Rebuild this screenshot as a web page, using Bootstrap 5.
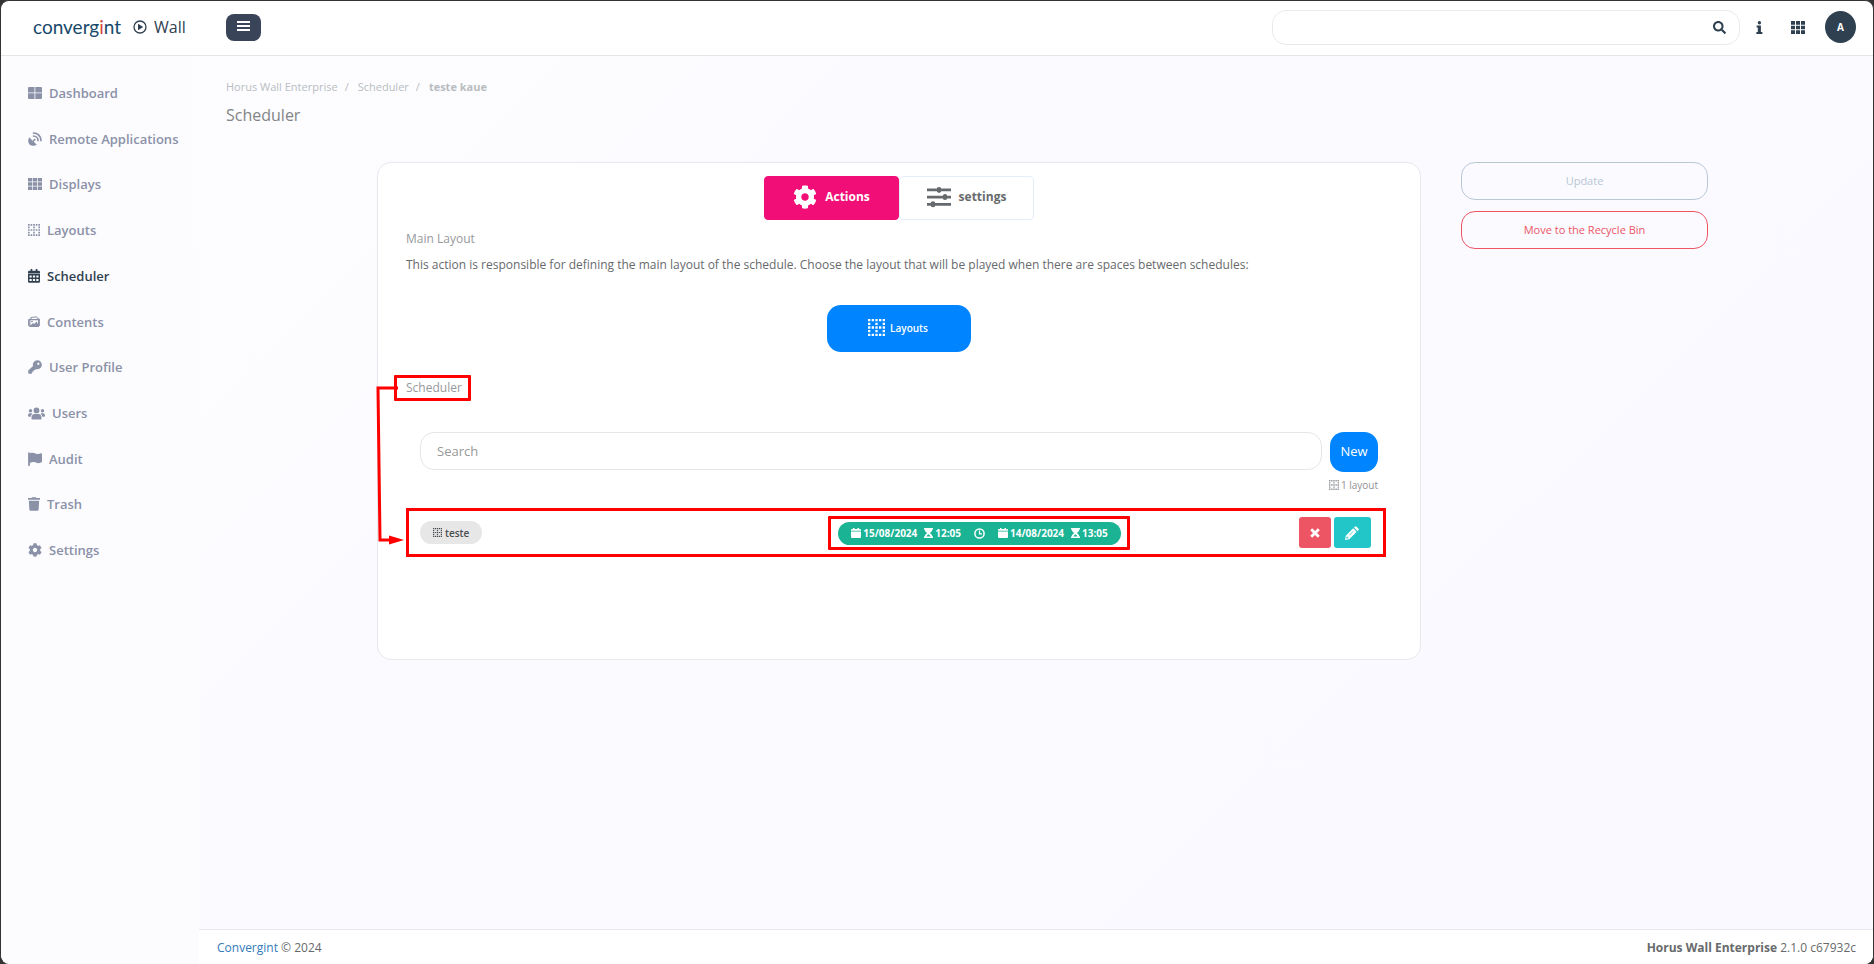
<!DOCTYPE html>
<html lang="en">
<head>
<meta charset="utf-8">
<meta name="viewport" content="width=device-width, initial-scale=1">
<title>Scheduler - Horus Wall Enterprise</title>
<link href="https://cdn.jsdelivr.net/npm/bootstrap@5.3.0/dist/css/bootstrap.min.css" rel="stylesheet">
<style>
  :root { --ink: #2f4050; --muted: #8b91a7; --line: #e7eaec; --blue: #0084ff; --mark: #ff0000; }
  html { background: #333; }
  body { font-family: "Open Sans", sans-serif; font-size: 12px; line-height: 18px; color: #676a6c; background: #333; }
  svg { fill: currentColor; flex: none; display: block; }
  .shell { border: 1px solid #333; border-bottom: 0; border-radius: 9px; background: #fff; overflow: hidden; }
  .topbar { height: 55px; border-bottom: 1px solid #e4e5e9; padding: 0 17px 2px 32px; color: var(--ink); }
  .brand { width: 193px; color: var(--ink); text-decoration: none; gap: 7px; }
  .brand-name { font-family: Lato, sans-serif; font-size: 19px; line-height: 24px; color: #17496b; width: 93px; }
  .brand-name span { color: #d8433f; }
  .brand-app { font-size: 16px; }
  .menu-btn { width: 35px; height: 27px; border: 0; border-radius: 8px; background: #3a4459; color: #fff; }
  .top-search { width: 468px; height: 35px; border: 1px solid var(--line); border-radius: 14px; padding: 0 13px 0 16px; }
  .top-search input { border: 0; outline: 0; background: none; min-width: 0; }
  .plain { border: 0; background: none; padding: 0; color: var(--ink); }
  .avatar { width: 31px; height: 32px; border: 0; border-radius: 50%; background: var(--ink); color: #fff; font-size: 10px; font-weight: 700; }
  .side { width: 198px; background: #fcfcff; padding-top: 14px; }
  .side ul { height: 503px; }
  .side a { color: var(--muted); font-size: 13px; font-weight: 600; text-decoration: none; padding-left: 27px; gap: 7px; }
  .side a.active { color: var(--ink); }
  .page { background: linear-gradient(135deg, #fdfdff, #fafaff 45%, #f9f9ff); }
  .crumbs { font-size: 11px; padding: 22px 27px 0; color: #b9bcbf; }
  .crumbs a { color: inherit; text-decoration: none; }
  .crumbs .breadcrumb-item + .breadcrumb-item { padding-left: 7px; }
  .crumbs .breadcrumb-item + .breadcrumb-item::before { color: inherit; padding-right: 9px; font-weight: 400; }
  .crumbs .active { color: #b9bcbf; font-weight: 700; }
  h1 { font-size: 16px; line-height: 22px; font-weight: 400; margin: 8px 27px 36px; color: #828486; }
  .work { display: grid; grid-template-columns: 1044fr 247fr; gap: 40px; padding: 0 165px 0 178px; align-items: start; }
  .panel { background: #fff; border: 1px solid #e7e7ec; border-radius: 14px; padding: 13px 28px 102px; }
  .tab-btn { width: 135px; height: 44px; border: 1px solid #e4eefa; border-radius: 4px; background: #fff; color: #676a6c; font-weight: 700; padding: 0 0 2px; gap: 8px; }
  .tab-btn.active { background: #f10e76; border-color: #f10e76; color: #fff; }
  h2 { font-size: 12px; line-height: 18px; font-weight: 400; margin: 0; color: #97999b; }
  .first-title { margin-top: 10px; }
  .layouts-btn { width: 144px; height: 47px; border: 0; border-radius: 14px; background: var(--blue); color: #fff; font-size: 10px; font-weight: 600; margin: 31px auto 27px; gap: 5px; padding: 0 2px 2px 0; }
  .list-tools { margin-top: 35px; }
  .list-tools, .tally { padding: 0 14px; }
  .find { height: 38px; border: 1px solid #e5e6e7; border-radius: 14px; padding: 0 16px; font-size: 13px; color: #676a6c; outline: 0; min-width: 0; }
  .find::placeholder { color: #999; }
  .new-btn { width: 48px; height: 40px; border: 0; border-radius: 14px; background: var(--blue); color: #fff; font-size: 13px; font-weight: 500; padding: 0 0 2px; }
  .tally { font-size: 10px; line-height: 14px; color: #909294; margin-top: 6px; gap: 2px; }
  .entry { display: grid; grid-template-columns: 407fr 401fr 140fr; height: 49px; margin: 16px 6px 0 0; padding: 0 12px 0 11px; border: 3px solid var(--mark); }
  .entry-dates { border: 3px solid var(--mark); border-radius: 1px; padding: 3px 6px 3px 7px; height: 34px; }
  .entry-acts { gap: 3px; }
  .pill { height: 23px; border-radius: 12px; font-size: 10px; font-weight: 700; }
  .pill-grey { background: #e7e7e7; color: #4a4d50; padding: 0 13px; font-weight: 600; gap: 3px; }
  .pill-green { background: #1ab394; color: #fff; padding: 0 13px; gap: 2px; }
  .pill-green .day { margin-right: 5px; }
  .pill-green .until { margin: 0 11px; }
  .act { height: 31px; width: 32px; border: 0; border-radius: 3px; background: #ed5565; color: #fff; }
  .act-edit { width: 37px; background: #23c6c8; }
  .side-actions { gap: 11px; }
  .side-btn { height: 38px; border: 1px solid currentColor; border-radius: 14px; background: none; font-size: 11px; color: #b9c7d5; }
  .side-btn-danger { color: #ed5565; }
  .foot { height: 35px; background: #fff; border-top: 1px solid var(--line); padding: 2px 17px 0 18px; }
  .foot a { color: #337ab7; text-decoration: none; }
  /* highlight drawn over the section title, with its arrow down to the list row */
  .flagged { position: relative; }
  .flagged::after { content: ""; position: absolute; inset: -4px -9px -4px -12px; border: 3px solid var(--mark); border-radius: 1px; }
  .flagged svg { position: absolute; left: -30px; top: 5px; color: var(--mark); z-index: 1; }
</style>
</head>
<body>
<svg class="d-none" aria-hidden="true">
  <symbol id="cog" viewBox="0 0 512 512"><path d="M487.4 315.7l-42.6-24.6c4.3-23.2 4.3-47 0-70.2l42.6-24.6c4.9-2.8 7.1-8.6 5.5-14-11.1-35.6-30-67.8-54.7-94.6-3.8-4.1-10-5.1-14.8-2.3L380.8 110c-17.9-15.4-38.5-27.3-60.8-35.1V25.8c0-5.6-3.9-10.5-9.4-11.7-36.7-8.2-74.3-7.8-109.2 0-5.5 1.2-9.4 6.1-9.4 11.7V75c-22.2 7.9-42.8 19.8-60.8 35.1L88.7 85.5c-4.9-2.8-11-1.9-14.8 2.3-24.7 26.7-43.6 58.9-54.7 94.6-1.7 5.4.6 11.2 5.5 14L67.3 221c-4.3 23.2-4.3 47 0 70.2l-42.6 24.6c-4.9 2.8-7.1 8.6-5.5 14 11.1 35.6 30 67.8 54.7 94.6 3.8 4.1 10 5.1 14.8 2.3l42.6-24.6c17.9 15.4 38.5 27.3 60.8 35.1v49.2c0 5.6 3.9 10.5 9.4 11.7 36.7 8.2 74.3 7.8 109.2 0 5.5-1.2 9.4-6.1 9.4-11.7v-49.2c22.2-7.9 42.8-19.8 60.8-35.1l42.6 24.6c4.9 2.8 11 1.9 14.8-2.3 24.7-26.7 43.6-58.9 54.7-94.6 1.5-5.5-.7-11.3-5.6-14.1zM256 336c-44.1 0-80-35.9-80-80s35.9-80 80-80 80 35.9 80 80-35.9 80-80 80z"/></symbol>
  <symbol id="frame" viewBox="0 0 13 13"><path fill="none" stroke="currentColor" stroke-width="1.8" stroke-dasharray="1.8 1" d="M0 .9H13M0 6.5H13M0 12.1H13M.9 0V13M6.5 0V13M12.1 0V13"/></symbol>
  <symbol id="grid9" viewBox="0 0 14 14"><path d="M0 1h4.200v3.500H0zM4.900 1h4.200v3.500H4.900zM9.800 1H14v3.500H9.800zM0 5.200h4.200v3.600H0zM4.900 5.200h4.200v3.600H4.900zM9.800 5.200H14v3.600H9.800zM0 9.500h4.200V13H0zM4.900 9.500h4.200V13H4.900zM9.800 9.500H14V13H9.800z"/></symbol>
  <symbol id="cal" viewBox="0 0 10 10"><path d="M1 1h1V0h1.500v1h3V0H8v1h1q1 0 1 1v.8H0V2q0-1 1-1zM0 3.400h10V9q0 1-1 1H1Q0 10 0 9z"/></symbol>
  <symbol id="glass" viewBox="0 0 9 10"><path d="M0 0h9v1.400h-.7C8.300 3 7 4.200 5.700 5 7 5.800 8.300 7 8.300 8.600H9V10H0V8.600h.7C.7 7 2 5.800 3.300 5 2 4.200.7 3 .7 1.400H0zM2.500 8.600h4C6.300 7.500 5.300 6.700 4.500 6.200 3.700 6.700 2.700 7.500 2.500 8.600z" fill-rule="evenodd"/></symbol>
</svg>

<div class="shell d-flex flex-column min-vh-100">
  <header class="topbar d-flex align-items-center">
    <a class="brand d-flex align-items-center" href="#">
      <span class="brand-name">converg<span>i</span>nt</span>
      <svg width="14" height="14" viewBox="0 0 14 14"><circle cx="7" cy="7" r="6" fill="none" stroke="currentColor" stroke-width="1.300"/><path d="M5 3.700 10.200 7 5 10.300z"/></svg>
      <span class="brand-app">Wall</span>
    </a>
    <button class="menu-btn d-flex align-items-center justify-content-center p-0" type="button" aria-label="Toggle menu"><svg width="13" height="12" viewBox="0 0 13 12"><path d="M0 0h13v2H0zM0 4h13v2H0zM0 8h13v2H0z"/></svg></button>
    <form class="top-search d-flex align-items-center ms-auto">
      <input class="flex-fill" type="search" aria-label="Search the site">
      <button class="plain" type="button" aria-label="Search"><svg width="13" height="13" viewBox="0 0 512 512"><path d="M505 442.700L405.300 343c-4.500-4.500-10.600-7-17-7H372c27.600-35.300 44-79.700 44-128C416 93.100 322.900 0 208 0S0 93.100 0 208s93.100 208 208 208c48.300 0 92.700-16.400 128-44v16.300c0 6.400 2.500 12.500 7 17l99.700 99.700c9.400 9.400 24.600 9.400 33.900 0l28.300-28.300c9.400-9.400 9.400-24.600.1-34zM208 336c-70.700 0-128-57.200-128-128 0-70.700 57.200-128 128-128 70.700 0 128 57.200 128 128 0 70.700-57.200 128-128 128z"/></svg></button>
    </form>
    <button class="plain ms-3" type="button" aria-label="Information"><svg width="7" height="13" viewBox="0 0 7 13"><circle cx="3.400" cy="1.700" r="1.700"/><path d="M.6 4.600h4.300v6.400H6.400V13H.4v-2h1.400V6.600H.6z"/></svg></button>
    <button class="plain ms-4 me-3" type="button" aria-label="Applications"><svg class="mx-1" width="14" height="13" viewBox="0 0 14 13"><path d="M0 0h4v3.700H0zM5 0h4v3.700H5zM10 0h4v3.700h-4zM0 4.700h4v3.600H0zM5 4.700h4v3.600H5zM10 4.700h4v3.600h-4zM0 9.300h4V13H0zM5 9.300h4V13H5zM10 9.300h4V13h-4z"/></svg></button>
    <button class="avatar p-0" type="button">A</button>
  </header>

  <div class="d-flex flex-fill">
    <nav class="side flex-shrink-0" aria-label="Main">
      <ul class="list-unstyled d-flex flex-column m-0">
        <li class="d-flex flex-fill"><a class="d-flex align-items-center" href="#"><svg width="14" height="14" viewBox="0 0 14 14"><path d="M1 1h5.500v5.500H0V2q0-1 1-1zM7.300 1H13q1 0 1 1v4.500H7.300zM0 7.300h6.500V13H1q-1 0-1-1zM7.300 7.300H14V12q0 1-1 1H7.300z"/></svg>Dashboard</a></li>
        <li class="d-flex flex-fill"><a class="d-flex align-items-center" href="#"><svg width="14" height="14" viewBox="0 0 14 14"><path d="M1.200 5.200 4.700 8.700 5.600 7.800A1 1 0 1 1 6.500 8.700L5.600 9.600 8.800 12.800C6 14.400 3.300 14 1.600 12.400-.1 10.600-.2 7.600 1.200 5.200z"/><path d="M5.500 1A7.500 7.500 0 0 1 13 8.500M5.500 4A4.500 4.500 0 0 1 10 8.500" fill="none" stroke="currentColor" stroke-width="1.700" stroke-linecap="round"/></svg>Remote Applications</a></li>
        <li class="d-flex flex-fill"><a class="d-flex align-items-center" href="#"><svg width="14" height="14"><use href="#grid9"/></svg>Displays</a></li>
        <li class="d-flex flex-fill"><a class="d-flex align-items-center" href="#"><svg width="12" height="12"><use href="#frame"/></svg>Layouts</a></li>
        <li class="d-flex flex-fill"><a class="active d-flex align-items-center" href="#" aria-current="page"><svg width="12" height="14" viewBox="0 0 12 14"><path fill-rule="evenodd" d="M1.300 1.700H2.600V0H4.300V1.700H7.700V0H9.400V1.700h1.300Q12 1.700 12 3V4.400H0V3Q0 1.700 1.300 1.700zM0 5.100H12V12.500q0 1.200-1.200 1.200H1.200Q0 13.700 0 12.500zM1.500 6.600V8.500H3.700V6.600zM4.900 6.600V8.500H7.100V6.600zM8.300 6.600V8.500H10.500V6.600zM1.500 9.900V12H3.700V9.900zM4.900 9.900V12H7.100V9.900zM8.300 9.900V12H10.500V9.900z"/></svg>Scheduler</a></li>
        <li class="d-flex flex-fill"><a class="d-flex align-items-center" href="#"><svg width="12" height="12" viewBox="0 0 12 12"><path d="M.6 10V3.500L3 3M11.400 10V3H9.500M3 3V1.500L8.500.8 10 3" fill="none" stroke="currentColor"/><path fill-rule="evenodd" d="M1.200 3H11V11H1.200zM2.400 4.200V9.500L5 7l1.200 1L8.500 5.500 10 8V4.200z"/><circle cx="4" cy="5.600" r=".8"/></svg>Contents</a></li>
        <li class="d-flex flex-fill"><a class="d-flex align-items-center" href="#"><svg width="14" height="14" viewBox="0 0 14 14"><path fill-rule="evenodd" d="M9.200.3A4.500 4.500 0 1 1 8 9.100L7.200 10H5.800v1.600H4.200v1.500L3.500 13.700H.6L.2 13.300V10.600L5 5.900A4.500 4.500 0 0 1 9.200.3zM10.300 2.500a1.200 1.200 0 1 0 .1 0z"/></svg>User Profile</a></li>
        <li class="d-flex flex-fill"><a class="d-flex align-items-center" href="#"><svg width="17" height="13" viewBox="0 0 17 13"><circle cx="8.500" cy="3.400" r="2.900"/><circle cx="2.500" cy="3.800" r="1.700"/><circle cx="14.500" cy="3.800" r="1.700"/><path d="M3.400 11.200C3.400 8.500 4.800 7 6.500 7h4c1.700 0 3.100 1.500 3.100 4.200 0 .7-.5 1.300-1.200 1.300H4.600c-.7 0-1.200-.6-1.200-1.300zM0 8.500C0 7 .9 6.200 2 6.200h2L4.400 7C3.300 7.700 2.900 8.700 2.700 9.700H1Q0 9.700 0 8.500zM17 8.500c0-1.500-.9-2.300-2-2.300h-2l-.4.8c1.100.7 1.500 1.700 1.700 2.700H16q1 0 1-1.200z"/></svg>Users</a></li>
        <li class="d-flex flex-fill"><a class="d-flex align-items-center" href="#"><svg width="14" height="14" viewBox="0 0 14 14"><path d="M1 .2Q1.900.2 1.900 1.200C4.500.2 6 .8 8 1.700c2 .7 3.600.2 5-.5Q14 1 14 1.900V10c-2 1.300-4 1.500-6.300.6-2-.8-3.800-.6-5.800.3v2.300Q1.900 14 1 14T.1 13.200V1.100Q.1.200 1 .2z"/></svg>Audit</a></li>
        <li class="d-flex flex-fill"><a class="d-flex align-items-center" href="#"><svg width="12" height="14" viewBox="0 0 12 14"><path d="M0 1h3.500L4 .2H8L8.500 1H12V2.800H0zM.8 3.700H11.200L10.600 12.700Q10.500 13.800 9.400 13.800H2.600Q1.500 13.800 1.400 12.700z"/></svg>Trash</a></li>
        <li class="d-flex flex-fill"><a class="d-flex align-items-center" href="#"><svg width="14" height="14"><use href="#cog"/></svg>Settings</a></li>
      </ul>
    </nav>

    <div class="page flex-fill d-flex flex-column">
      <main class="flex-fill pb-4">
        <nav aria-label="breadcrumb">
          <ol class="crumbs breadcrumb m-0">
            <li class="breadcrumb-item"><a href="#">Horus Wall Enterprise</a></li>
            <li class="breadcrumb-item"><a href="#">Scheduler</a></li>
            <li class="breadcrumb-item active" aria-current="page">teste kaue</li>
          </ol>
        </nav>
        <h1>Scheduler</h1>
        <div class="work">
          <section class="panel">
            <div class="d-flex justify-content-center">
              <button class="tab-btn active d-flex align-items-center justify-content-center" type="button"><svg width="24" height="24"><use href="#cog"/></svg>Actions</button>
              <button class="tab-btn d-flex align-items-center justify-content-center" type="button"><svg width="24" height="22" viewBox="0 0 24 22"><path d="M0 2.500h24v2.800H0zM0 9.700h24v2.800H0zM0 16.900h24v2.800H0zM10 1.700q2-1.600 4 0v4.400q-2 1.600-4 0zM16 8.900q2-1.600 4 0v4.400q-2 1.600-4 0zM4 16.100q2-1.600 4 0v4.400q-2 1.600-4 0z"/></svg>settings</button>
            </div>
            <h2 class="first-title">Main Layout</h2>
            <p class="mt-2 mb-0">This action is responsible for defining the main layout of the schedule. Choose the layout that will be played when there are spaces between schedules:</p>
            <button class="layouts-btn d-flex align-items-center justify-content-center" type="button"><svg width="17" height="17"><use href="#frame"/></svg>Layouts</button>
            <h2 class="d-inline-block flagged">Scheduler
              <svg width="30" height="168" viewBox="0 0 30 168" aria-hidden="true"><path d="M22 4H2L4 156H14" fill="none" stroke="currentColor" stroke-width="3"/><path d="M13 151.500 28 156 13 160.500z"/></svg>
            </h2>
            <div class="list-tools d-flex gap-2 align-items-start">
              <input class="find flex-fill" type="search" placeholder="Search" aria-label="Search layouts">
              <button class="new-btn" type="button">New</button>
            </div>
            <div class="tally d-flex justify-content-end align-items-center"><svg width="10" height="10"><use href="#frame"/></svg>1 layout</div>
            <div class="entry align-items-center">
              <div><span class="pill pill-grey d-inline-flex align-items-center"><svg width="9" height="9"><use href="#frame"/></svg>teste</span></div>
              <div class="d-flex"><div class="entry-dates">
                <span class="pill pill-green d-flex align-items-center">
                  <svg width="10" height="10"><use href="#cal"/></svg><span class="day">15/08/2024</span>
                  <svg width="9" height="10"><use href="#glass"/></svg><span>12:05</span>
                  <svg class="until" width="11" height="11" viewBox="0 0 11 11"><circle cx="5.500" cy="5.500" r="4.600" fill="none" stroke="currentColor" stroke-width="1.500"/><path d="M5.500 2.500V5.800H8" fill="none" stroke="currentColor" stroke-width="1.200"/></svg>
                  <svg width="10" height="10"><use href="#cal"/></svg><span class="day">14/08/2024</span>
                  <svg width="9" height="10"><use href="#glass"/></svg><span>13:05</span>
                </span>
              </div></div>
              <div class="entry-acts d-flex justify-content-end">
                <button class="act d-flex align-items-center justify-content-center p-0" type="button" aria-label="Remove"><svg width="10" height="10" viewBox="0 0 10 10"><path d="M1.200 1.200 8.800 8.800M8.800 1.200 1.200 8.800" stroke="currentColor" stroke-width="2.800"/></svg></button>
                <button class="act act-edit d-flex align-items-center justify-content-center p-0" type="button" aria-label="Edit"><svg width="14" height="14" viewBox="0 0 14 14"><path fill-rule="evenodd" d="M8.200 2.300 11.700 5.800 4.300 13.200 0 14 .8 9.700zM9 1.500 10.100.4Q10.600 0 11.200.4L13.600 2.800Q14 3.400 13.600 3.900L12.500 5zM1.700 10.600 1.300 12.700 3.400 12.300V11.500H2.500V10.600zM4.200 9 4.600 9.400 8.400 5.600 8 5.200z"/></svg></button>
              </div>
            </div>
          </section>
          <aside class="side-actions d-flex flex-column">
            <button class="side-btn" type="button">Update</button>
            <button class="side-btn side-btn-danger" type="button">Move to the Recycle Bin</button>
          </aside>
        </div>
      </main>
      <footer class="foot d-flex justify-content-between align-items-center">
        <div><a href="#">Convergint</a> © 2024</div>
        <div><strong>Horus Wall Enterprise</strong> 2.1.0 c67932c</div>
      </footer>
    </div>
  </div>
</div>
<script src="https://cdn.jsdelivr.net/npm/bootstrap@5.3.0/dist/js/bootstrap.bundle.min.js"></script>
</body>
</html>
